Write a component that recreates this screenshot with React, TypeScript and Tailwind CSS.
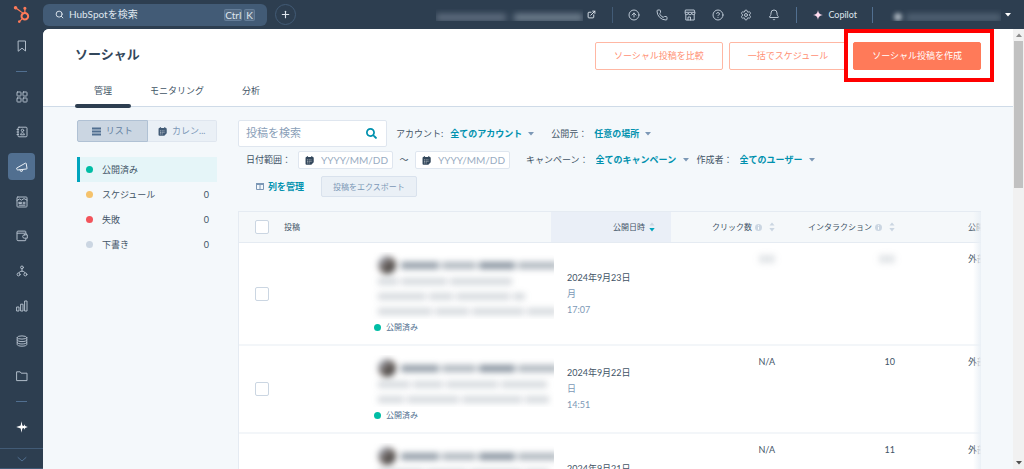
import type { ReactNode } from 'react';
import { clsx } from 'clsx';
import { FaHubspot, FaSearch } from 'react-icons/fa';
import { Bell, Bookmark, CircleArrowUp, CircleHelp, ExternalLink, Phone, Plus, Search, Settings, Store } from 'lucide-react';

interface Post {
  id: number;
  date: string;
  day: string;
  time: string;
  clicks: string | null;
  interactions: string | null;
  source: string;
  lines: number[][];
}

// Text lines of a masked post: each inner array is one line, given as run widths
const POSTS: Post[] = [
  { id: 1, date: '2024年9月23日', day: '月', time: '17:07', clicks: null, interactions: null, source: '外部', lines: [[20, 46, 62], [48, 24, 54, 12], [54, 34, 52, 30]] },
  { id: 2, date: '2024年9月22日', day: '日', time: '14:51', clicks: 'N/A', interactions: '10', source: '外部', lines: [[32, 30, 52, 46], [26, 52, 60, 24]] },
  { id: 3, date: '2024年9月21日', day: '土', time: '12:30', clicks: 'N/A', interactions: '11', source: '外部', lines: [[46, 40, 52, 24], [40, 52], [60, 40]] },
];

const STATUSES = [
  { label: '公開済み', dot: 'bg-[#00bda5]', count: null },
  { label: 'スケジュール', dot: 'bg-[#f5c26b]', count: 0 },
  { label: '失敗', dot: 'bg-[#f2545b]', count: 0 },
  { label: '下書き', dot: 'bg-[#cbd6e2]', count: 0 },
];

function Glyph({ children, className }: { children: ReactNode; className?: string }) {
  return (
    <svg viewBox="0 0 12 12" fill="none" stroke="currentColor" strokeWidth="1" strokeLinejoin="round" strokeLinecap="round" className={clsx('size-3 shrink-0', className)} aria-hidden="true">
      {children}
    </svg>
  );
}

function CalendarIcon({ className }: { className?: string }) {
  return (
    <svg viewBox="0 0 10 10" className={clsx('size-[9px] shrink-0', className)} aria-hidden="true">
      <path fill="currentColor" d="M2 0.3h1.4v0.9h3.4V0.3h1.4v0.9h0.5a1 1 0 0 1 1 1V7L7 9.7H1.6a1 1 0 0 1-1-1V2.2a1 1 0 0 1 1-1H2z" />
      <path stroke="#fff" strokeWidth="0.8" strokeDasharray="1.2 0.7" opacity="0.75" d="M2.2 4.3h5.8M2.2 6h5.8M2.2 7.7h3.6" />
    </svg>
  );
}

function Caret({ className }: { className?: string }) {
  return (
    <svg viewBox="0 0 6 4" className={clsx('h-1 w-[6px] shrink-0', className)} aria-hidden="true">
      <path fill="currentColor" d="M0 0h6L3 3.6z" />
    </svg>
  );
}

function SortIcon({ active }: { active?: boolean }) {
  return (
    <svg viewBox="0 0 6 10" className="h-[10px] w-[6px] shrink-0" aria-hidden="true">
      <path fill="#cbd6e2" d="M0.5 3.6h5L3 0.6z" />
      <path fill={active ? '#00a4bd' : '#cbd6e2'} d="M0.3 6h5.4L3 9.4z" />
    </svg>
  );
}

function InfoIcon() {
  return (
    <svg viewBox="0 0 8 8" className="size-[7px] shrink-0" aria-hidden="true">
      <circle cx="4" cy="4" r="4" fill="#cbd6e2" />
      <path stroke="#fff" strokeWidth="1.1" d="M4 1.5v1M4 3.4v3" />
    </svg>
  );
}

const NAV_ICONS: { label: string; icon: ReactNode }[] = [
  {
    label: 'ワークスペース',
    icon: <Glyph><rect x="1" y="1" width="4" height="4" rx=".6" /><rect x="7" y="1" width="4" height="4" rx=".6" /><rect x="1" y="7" width="4" height="4" rx=".6" /><rect x="7" y="7" width="4" height="4" rx=".6" /></Glyph>,
  },
  {
    label: 'CRM',
    icon: <Glyph><rect x="2" y="1.2" width="9" height="9.6" rx="1" /><path d="M1 3.5h1.5M1 6h1.5M1 8.5h1.5" /><circle cx="6.5" cy="4.4" r="1.2" /><path d="M4.6 8.4c.2-2.4 3.6-2.4 3.8 0z" /></Glyph>,
  },
  {
    label: 'マーケティング',
    icon: <Glyph><path d="M1 6.9 9.3 2.2a.6.6 0 0 1 .9.3l.8 4.8a.6.6 0 0 1-.7.7L1.6 9a.8.8 0 0 1-.7-.6zM4 8.9l.5 1.3 1.6.1.6-1.7" /></Glyph>,
  },
  {
    label: 'コンテンツ',
    icon: <Glyph><rect x="1" y="1" width="10" height="10" rx=".8" /><path d="M1 4.4 3.5 3l2 1.2L8 2.6l3 1.5M3.2 6.3h2.5v1.2H3.2zM7.2 6.3h1.8M7.2 7.7h1.8M3.2 9.2h5.8" /></Glyph>,
  },
  {
    label: 'コマース',
    icon: <Glyph><path d="M9.8 3.2V1.8a.7.7 0 0 0-.7-.7H2a1 1 0 0 0-1 1v7.6a1 1 0 0 0 1 1h7.1a.7.7 0 0 0 .7-.7V8.8M1.2 3.2h8.6a.6.6 0 0 1 .6.6v.8" /><path d="M8.4 4.8h2.9v3.4H8.4a1.7 1.7 0 0 1 0-3.4z" /></Glyph>,
  },
  {
    label: 'オートメーション',
    icon: <Glyph><circle cx="6" cy="2.4" r="1.4" /><circle cx="2.6" cy="9.4" r="1.5" /><circle cx="9.4" cy="9.4" r="1.5" /><path d="M6 3.9v2.4M3 7.8C3.3 6.6 4.4 6.2 6 6.2s2.7.4 3 1.6" /></Glyph>,
  },
  {
    label: 'レポート',
    icon: <Glyph><path d="M1 7h2v4H1zM5 4.2h2V11H5zM9 1h2v10H9z" /></Glyph>,
  },
  {
    label: 'データ管理',
    icon: <Glyph><ellipse cx="6" cy="2.5" rx="4.8" ry="1.6" /><path d="M1.2 2.5v7c0 .9 2 1.7 4.8 1.7s4.8-.8 4.8-1.7v-7M1.2 5c0 .9 2 1.6 4.8 1.6s4.8-.7 4.800-1.600M1.200 7.400c0 .9 2 1.600 4.800 1.600s4.800-.7 4.800-1.600" /></Glyph>,
  },
  {
    label: 'ライブラリー',
    icon: <Glyph><path d="M1 1.800h3.200l1 1.400H11v7.400H1z" /></Glyph>,
  },
];

function NavItem({ label, active, children }: { label: string; active?: boolean; children: ReactNode }) {
  return (
    <li className="flex max-h-11 flex-1 items-center justify-center">
      <a
        href="#"
        aria-label={label}
        className={clsx('flex size-[27px] items-center justify-center rounded', active ? 'bg-[#516f90] text-[#eaf0f6]' : 'text-[#b0bcc9]')}
      >
        {children}
      </a>
    </li>
  );
}

function Sidebar() {
  return (
    <nav aria-label="メイン" className="flex w-[43px] shrink-0 flex-col">
      <ul className="flex min-h-0 flex-1 flex-col pb-1">
        <NavItem label="ブックマーク"><Glyph><path d="M2.500 1h7v10L6 8.200 2.500 11z" /></Glyph></NavItem>
        <li className="flex h-4 items-center justify-center"><span className="h-px w-[11px] bg-[#516f90]" /></li>
        {NAV_ICONS.map((item) => (
          <NavItem key={item.label} label={item.label} active={item.label === 'マーケティング'}>{item.icon}</NavItem>
        ))}
        <li className="flex h-4 items-center justify-center"><span className="h-px w-[11px] bg-[#516f90]" /></li>
        <NavItem label="Copilot">
          <svg viewBox="0 0 12 12" className="size-3 text-white" fill="currentColor" aria-hidden="true">
            <path d="M5.500 .2 6.300 4.600 8 5 8.600 3.200 9.200 5 11.800 6 9.200 7 8.600 8.800 8 7 6.300 7.400 5.500 11.800 4.700 7.400 .2 6 4.700 4.600z" />
          </svg>
        </NavItem>
      </ul>
      <button aria-label="展開" className="flex h-[21px] items-center justify-center border-y border-[#425b76] text-[#516f90]">
        <Glyph><path d="M2 4.500 6 8l4-3.500" /></Glyph>
      </button>
    </nav>
  );
}

function TopBar() {
  return (
    <header className="flex h-[29px] shrink-0 items-center pr-[13px] text-[10px] text-[#dfe6ee]">
      <a href="#" aria-label="HubSpot" className="flex w-[43px] shrink-0 justify-center text-[#ff7a59]"><FaHubspot size={17} /></a>
      <label className="flex h-[22px] w-[224px] items-center rounded-md bg-[#425b76] px-3">
        <Search size={9} strokeWidth={2.500} className="shrink-0" />
        <input type="text" aria-label="検索" placeholder="HubSpotを検索" className="ml-[5px] min-w-0 flex-1 outline-none placeholder:text-[#dfe6ee]" />
        <kbd className="rounded-xs border border-[#7c98b6]/40 bg-white/10 font-[inherit] leading-[10px]">Ctrl</kbd>
        <kbd className="ml-[2px] rounded-xs border border-[#7c98b6]/40 bg-white/10 px-[1px] font-[inherit] leading-[10px]">K</kbd>
      </label>
      <button aria-label="新規作成" className="ml-2 flex size-[21px] items-center justify-center rounded-full border border-[#425b76]"><Plus size={11} strokeWidth={2.500} /></button>

      <div className="ml-auto flex items-center">
        <div className="flex h-3 w-[147px] items-end overflow-hidden" aria-hidden="true">
          <div className="flex w-full gap-2 blur-[3px]">
            <span className="h-[7px] flex-1 bg-[#a3b0be]/45" />
            <span className="h-[7px] flex-1 bg-[#a3b0be]/60" />
          </div>
        </div>
        <ExternalLink size={9} strokeWidth={2.500} className="ml-1" />
        <span className="ml-4 h-4 w-px bg-[#425b76]" />
        <div className="ml-[15px] flex items-center gap-4 text-[#b9c5d2]">
          <CircleArrowUp size={12} strokeWidth={2} />
          <Phone size={12} strokeWidth={2} />
          <Glyph>
            <path d="M1.800 1h8.400l.8 2.800a1.600 1.600 0 0 1-3.300.3 1.700 1.700 0 0 1-3.400 0A1.600 1.600 0 0 1 1 3.800zM1.800 5.400V11h8.400V5.400M1.400 3.300h9.200M4 11V8h2.500v3" />
          </Glyph>
          <CircleHelp size={12} strokeWidth={2} />
          <Settings size={12} strokeWidth={2} />
          <Bell size={12} strokeWidth={2} />
        </div>
        <span className="ml-4 h-4 w-px bg-[#516f90]" />
        <button className="ml-4 flex items-center gap-[5px] text-[9px]">
          <svg viewBox="0 0 10 10" className="size-[10px]" aria-hidden="true"><path fill="#ffdcef" d="M5 0c.5 3.300 1.700 4.500 5 5-3.300.5-4.500 1.700-5 5-.5-3.300-1.700-4.500-5-5 3.300-.5 4.500-1.700 5-5z" /></svg>
          Copilot
        </button>
        <span className="ml-[15px] h-4 w-px bg-[#516f90]" />
        <button aria-label="アカウント" className="ml-[17px] flex items-center">
          <span className="flex h-3 w-[111px] items-end gap-1 overflow-hidden" aria-hidden="true">
            <span className="ml-1 size-[8px] rounded-full bg-[#dde4ea]/70 blur-[2px]" />
            <span className="h-[7px] flex-1 bg-[#8696a7]/45 blur-[3px]" />
          </span>
          <Caret className="ml-1 text-white" />
        </button>
      </div>
    </header>
  );
}

function PageHeader() {
  return (
    <div className="border-b border-[#cfdbe8] bg-white px-8 pt-[13px]">
      <div className="flex items-center gap-[6px]">
        <h1 className="mr-auto self-start text-[13px] leading-6 font-bold text-[#33475b]">ソーシャル</h1>
        <button className="h-7 rounded-xs border border-[#ffb7a3] px-[18px] text-[9px] text-[#ff8f73]">ソーシャル投稿を比較</button>
        <button className="h-7 rounded-xs border border-[#ffb7a3] px-[18px] text-[9px] text-[#ff8f73]">一括でスケジュール</button>
        <div className="relative">
          <button className="block h-7 rounded-xs border border-[#ff7a59] bg-[#ff7a59] px-[18px] text-[9px] text-white">ソーシャル投稿を作成</button>
          <span className="pointer-events-none absolute -top-[13px] -right-[13px] -bottom-[12px] -left-[9px] border-4 border-[#ff0000]" />
        </div>
      </div>
      <div role="tablist" className="mt-[7px] flex text-[9px]">
        <button role="tab" aria-selected="true" className="relative h-[29px] px-[19px] pb-[2px]">
          管理
          <span className="absolute inset-x-0 -bottom-[2px] h-1 rounded-full bg-[#2d3e50]" />
        </button>
        <button role="tab" aria-selected="false" className="px-[19px] pb-[2px]">モニタリング</button>
        <button role="tab" aria-selected="false" className="px-[19px] pb-[2px]">分析</button>
      </div>
    </div>
  );
}

function StatusPanel() {
  return (
    <aside className="w-[140px] shrink-0 text-[9px]">
      <div className="flex h-[22px] text-[#6380a0]">
        <button aria-pressed="true" className="flex flex-1 items-center justify-center gap-[5px] rounded-l-xs border border-[#b0c1d4] bg-[#cbd6e2]">
          <svg viewBox="0 0 9 9" className="size-[9px] text-[#516f90]" aria-hidden="true"><path stroke="currentColor" strokeWidth="2" d="M0 1.500h9M0 4.500h9M0 7.500h9" /></svg>
          リスト
        </button>
        <button aria-pressed="false" className="flex flex-1 items-center justify-center gap-[5px] rounded-r-xs border border-l-0 border-[#dfe6ef] bg-[#eaf0f6] text-[#7c98b6]">
          <CalendarIcon className="text-[#425b76]" />
          カレン...
        </button>
      </div>
      <ul className="mt-[15px]">
        {STATUSES.map((s, i) => (
          <li key={s.label}>
            <button className={clsx('flex h-[25px] w-full items-center border-l-[3px] pr-2 pl-[6px]', i === 0 ? 'border-[#00a4bd] bg-[#e5f5f8]' : 'border-transparent')}>
              <span className={clsx('size-[7px] rounded-full', s.dot)} />
              <span className="ml-[9px]">{s.label}</span>
              {s.count !== null && <span className="ml-auto">{s.count}</span>}
            </button>
          </li>
        ))}
      </ul>
    </aside>
  );
}

function FilterSelect({ id, label, value }: { id: string; label: string; value: string }) {
  return (
    <div className="flex shrink-0 items-center">
      <label htmlFor={id}>{label}</label>
      <select id={id} className="ml-[7px] appearance-none font-bold text-[#0091ae] outline-none">
        <option>{value}</option>
      </select>
      <Caret className="ml-[5px] text-[#7c98b6]" />
    </div>
  );
}

function DateField({ label }: { label: string }) {
  return (
    <div className="flex h-[18px] w-[95px] items-center rounded-xs border border-[#dfe6ef] bg-white pl-[6px]">
      <CalendarIcon className="text-[#33475b]" />
      <input type="text" aria-label={label} placeholder="YYYY/MM/DD" className="ml-[7px] w-full min-w-0 text-[10px] outline-none placeholder:text-[#99acc2]" />
    </div>
  );
}

function Filters() {
  return (
    <div className="text-[9px]">
      <div className="flex items-center">
        <label className="mr-[9px] flex h-[27px] w-[149px] items-center rounded-xs border border-[#dfe6ef] bg-white px-[7px]">
          <input type="text" aria-label="投稿を検索" placeholder="投稿を検索" className="w-full min-w-0 text-[11px] outline-none placeholder:text-[#8aa0b8]" />
          <FaSearch size={11} className="mr-[2px] shrink-0 text-[#0091ae]" />
        </label>
        <div className="flex gap-[17px]">
          <FilterSelect id="account" label="アカウント:" value="全てのアカウント" />
          <FilterSelect id="source" label="公開元：" value="任意の場所" />
        </div>
      </div>
      <div className="mt-1 flex items-center pl-2">
        <span className="mr-[7px]">日付範囲：</span>
        <DateField label="開始日" />
        <span className="w-[22px] text-center">～</span>
        <DateField label="終了日" />
        <div className="ml-4 flex gap-2">
          <FilterSelect id="campaign" label="キャンペーン：" value="全てのキャンペーン" />
          <FilterSelect id="author" label="作成者：" value="全てのユーザー" />
        </div>
      </div>
      <div className="mt-[7px] flex items-center pl-[18px]">
        <button className="flex items-center gap-1 font-bold text-[#0091ae]">
          <svg viewBox="0 0 8 7" className="h-[7px] w-2" fill="none" stroke="#7c98b6" aria-hidden="true"><path d="M.5 1h7v5.500h-7zM4 1v5.500" /><path strokeWidth="2" d="M0 1h8" /></svg>
          列を管理
        </button>
        <button className="ml-[17px] h-[21px] rounded-xs border border-[#d9e2ed] bg-[#eaf0f6] px-[11px] text-[8px] text-[#7c98b6]">投稿をエクスポート</button>
      </div>
    </div>
  );
}

function Check({ label }: { label: string }) {
  return <input type="checkbox" aria-label={label} className="block size-[14px] appearance-none rounded-xs border border-[#cbd6e2] bg-white" />;
}

function MaskedPost({ lines }: { lines: number[][] }) {
  return (
    <div className="w-[184px] overflow-hidden" aria-hidden="true">
      <div className="flex h-[22px] items-center gap-[5px] pt-1 pl-2">
        <span className="size-[18px] shrink-0 rounded-full bg-linear-to-br from-[#b9c6da] via-[#6a625e] to-[#222222] blur-[3px]" />
        <span className="flex gap-[3px] blur-[3px]">
          <span className="h-[7px] w-[38px] bg-[#33475b]/55" />
          <span className="h-[7px] w-[34px] bg-[#33475b]/40" />
          <span className="h-[7px] w-[36px] bg-[#33475b]/60" />
          <span className="h-[7px] w-[40px] bg-[#33475b]/40" />
        </span>
      </div>
      {lines.map((runs, i) => (
        <div key={i} className="flex h-[15px] items-center gap-[3px] pl-2 blur-[3px]">
          {runs.map((w, j) => (
            <span key={j} className="h-[7px] shrink-0 bg-[#33475b]/20" style={{ width: w }} />
          ))}
        </div>
      ))}
    </div>
  );
}

function Metric({ value }: { value: string | null }) {
  if (value !== null) return <>{value}</>;
  return <span className="mt-1 ml-auto block h-2 w-4 bg-[#33475b]/15 blur-[3px]" aria-hidden="true" />;
}

function PostTable() {
  return (
    <div className="relative mt-[14px] overflow-hidden border-t border-l border-[#e5ebf2] bg-white">
      <table className="w-[792px] table-fixed border-separate border-spacing-0 text-[9px]">
        <colgroup>
          <col className="w-[37px]" />
          <col />
          <col className="w-[120px]" />
          <col className="w-[120px]" />
          <col className="w-[120px]" />
          <col className="w-[120px]" />
        </colgroup>
        <thead>
          <tr className="h-[31px] bg-[#f5f8fa] text-[8px] *:border-b *:border-[#e5ebf2] *:p-0 *:font-normal">
            <th><div className="pl-4"><Check label="すべて選択" /></div></th>
            <th className="text-left"><div className="pl-2">投稿</div></th>
            <th className="bg-[#eaeff7]" aria-sort="descending"><div className="flex items-center justify-end gap-1 pr-4">公開日時<SortIcon active /></div></th>
            <th><div className="flex items-center justify-end pr-4">クリック数<span className="ml-[3px]"><InfoIcon /></span><span className="ml-[7px]"><SortIcon /></span></div></th>
            <th><div className="flex items-center justify-end pr-4">インタラクション<span className="ml-[3px]"><InfoIcon /></span><span className="ml-[7px]"><SortIcon /></span></div></th>
            <th className="text-left"><div className="pl-[57px]">公開元</div></th>
          </tr>
        </thead>
        <tbody>
          {POSTS.map((post) => (
            <tr key={post.id} className="*:border-b-2 *:border-[#f3f6f9] *:p-0">
              <td><div className="pl-4"><Check label={`${post.date}の投稿を選択`} /></div></td>
              <td>
                <div className="pt-[9px] pb-[9px] pl-[94px]">
                  <MaskedPost lines={post.lines} />
                  <div className="flex h-4 items-center gap-[5px] pl-1 text-[8px] text-[#516f90]">
                    <span className="size-[7px] rounded-full bg-[#00bda5]" />
                    公開済み
                  </div>
                </div>
              </td>
              <td>
                <div className="pl-4 leading-4 text-[#7c98b6]">
                  <div className="text-[#425466]">{post.date}</div>
                  <div>{post.day}</div>
                  <div>{post.time}</div>
                </div>
              </td>
              <td className="align-top"><div className="pt-2 pr-4 text-right leading-4"><Metric value={post.clicks} /></div></td>
              <td className="align-top"><div className="pt-2 pr-4 text-right leading-4"><Metric value={post.interactions} /></div></td>
              <td className="align-top"><div className="pt-2 pl-[57px] leading-4">{post.source}</div></td>
            </tr>
          ))}
        </tbody>
      </table>
      <div className="absolute inset-y-0 right-0 w-2 bg-linear-to-r from-transparent to-[#eaf0f6]" />
    </div>
  );
}

function ScrollTrack() {
  return (
    <div className="flex w-[11px] shrink-0 flex-col items-center bg-[#f1f1f1] pt-1 pb-1 text-[#505050]" aria-hidden="true">
      <Caret className="rotate-180 text-[#8c8c8c]" />
      <div className="mt-1 h-[147px] w-[9px] bg-[#c1c1c1]" />
      <Caret className="mt-auto" />
    </div>
  );
}

export default function App() {
  return (
    <div className="flex h-screen flex-col overflow-hidden bg-[#2d3e50] font-['Lato','Noto_Sans_CJK_JP',sans-serif] text-[#425466]">
      <TopBar />
      <div className="flex min-h-0 flex-1">
        <Sidebar />
        <div className="flex min-w-0 flex-1 overflow-hidden rounded-tl-md bg-[#f4f8fb]">
          <main className="min-w-0 flex-1">
            <PageHeader />
            <div className="flex gap-[21px] pt-[13px] pr-8 pl-[34px]">
              <StatusPanel />
              <section className="min-w-0 flex-1">
                <Filters />
                <PostTable />
              </section>
            </div>
          </main>
          <ScrollTrack />
        </div>
      </div>
    </div>
  );
}
